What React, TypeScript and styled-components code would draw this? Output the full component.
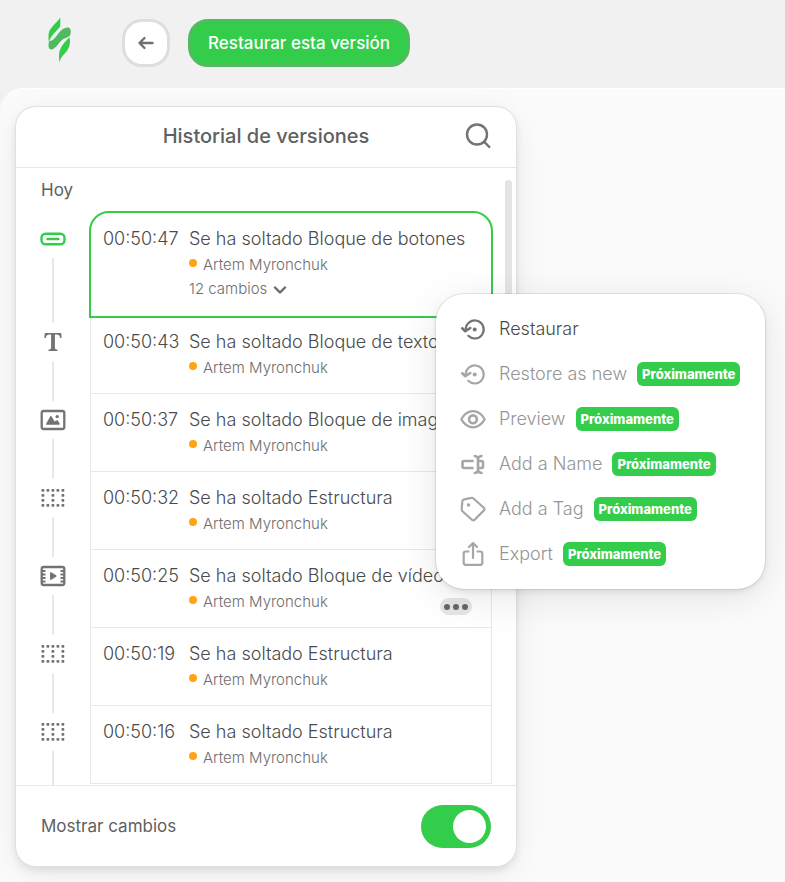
import React, { useState } from "react";
import styled, { createGlobalStyle, css } from "styled-components";

const GREEN = "#34cc4b";
const GREEN_DARK = "#53bb5f";
const TEXT = "#606060";
const TEXT_LIGHT = "#4a4a4a";
const MUTED = "#6e6e6e";
const ICON = "#737373";
const LINE = "#e8e8e8";

const GlobalStyle = createGlobalStyle`
  *, *::before, *::after { box-sizing: border-box; }
  body {
    margin: 0;
    background: #f1f1f1;
    color: ${TEXT};
    font-family: Inter, "Liberation Sans", sans-serif;
    font-size: 17px;
    line-height: 24px;
  }
  button { font: inherit; color: inherit; cursor: pointer; }
  h1, h2, p, ul, ol { margin: 0; padding: 0; list-style: none; font-weight: 400; }
  svg { display: block; flex: none; }
`;

const Page = styled.div`
  display: flex;
  flex-direction: column;
  height: 100vh;
  min-height: 600px;
  overflow: hidden;
`;

const TopBar = styled.header`
  display: flex;
  flex: none;
  align-items: center;
  height: 88px;
  padding: 0 48px 2px;
`;

const LogoLink = styled.a`
  margin-right: 50px;
  margin-bottom: 6px;
`;

const BackButton = styled.button`
  display: grid;
  place-items: center;
  width: 48px;
  height: 48px;
  margin-right: 18px;
  padding: 0;
  border: 3px solid #dedede;
  border-radius: 20px;
  background: #fff;
`;

const RestoreButton = styled.button`
  height: 48px;
  padding: 0 17px;
  border: 3px solid ${GREEN_DARK};
  border-radius: 20px;
  background: ${GREEN};
  color: #fff;
  font-size: 17px;
  font-weight: 500;
  white-space: nowrap;
`;

const Canvas = styled.main`
  display: flex;
  flex: 1;
  min-height: 0;
  padding: 18px 16px 16px;
  border-top: 1px solid #fff;
  border-top-left-radius: 24px;
  background: #fbfbfb;
`;

const Panel = styled.section`
  position: relative;
  display: flex;
  flex-direction: column;
  flex: 0 1 500px;
  min-width: 0;
  border-radius: 20px;
  background: #fff;
  box-shadow: 0 0 0 1px #e0e0e0, 0 4px 8px rgba(0, 0, 0, 0.1), 0 8px 36px rgba(0, 0, 0, 0.07);
`;

const PanelHeader = styled.div`
  display: grid;
  grid-template-columns: 48px 1fr 48px;
  align-items: center;
  flex: none;
  height: 61px;
  padding: 0 14px 2px;
  border-bottom: 1px solid ${LINE};
`;

const PanelTitle = styled.h1`
  grid-column: 2;
  font-size: 20px;
  font-weight: 500;
  text-align: center;
`;

const IconButton = styled.button`
  display: grid;
  place-items: center;
  width: 48px;
  height: 48px;
  padding: 0;
  border: 0;
  background: none;
`;

const ListArea = styled.div`
  position: relative;
  flex: 1;
  min-height: 0;
  padding: 10px 24px 0 0;
  overflow: hidden;
`;

const ScrollThumb = styled.div`
  position: absolute;
  top: 12px;
  right: 4px;
  width: 7px;
  height: 240px;
  border-radius: 4px;
  background: #e4e4e4;
`;

const DayHeading = styled.h2`
  padding-left: 25px;
  margin-bottom: 9px;
  font-size: 17px;
`;

const Entry = styled.li`
  display: grid;
  grid-template-columns: 73px minmax(0, 1fr);
  margin-right: -1px;
`;

const Rail = styled.div`
  display: flex;
  flex-direction: column;
  align-items: center;
`;

const RailIcon = styled.div<{ $active?: boolean }>`
  display: grid;
  place-items: center;
  flex: none;
  height: 38px;
  margin-top: ${(p) => (p.$active ? 9 : 7)}px;
  color: ${(p) => (p.$active ? GREEN : ICON)};
`;

const RailLine = styled.div`
  flex: 1;
  width: 2px;
  margin-bottom: -7px;
  background: ${LINE};
`;

const Card = styled.article<{ $active?: boolean }>`
  position: relative;
  display: grid;
  grid-template-columns: 86px minmax(0, 1fr);
  color: ${TEXT_LIGHT};
  ${(p) =>
    p.$active
      ? css`
          min-height: 107px;
          margin-bottom: -2px;
          padding: 14px 0 14px 12px;
          border: 2px solid ${GREEN};
          border-radius: 20px 20px 0 0;
          z-index: 1;
        `
      : css`
          min-height: 78px;
          margin: 0 1px;
          padding: 14px 0 12px 12px;
          border: 1px solid ${LINE};
          border-top: 0;
        `}
`;

const Time = styled.time`
  font-size: 18px;
  font-weight: 300;
`;

const Action = styled.p`
  font-size: 18px;
  font-weight: 300;
  white-space: nowrap;
`;

const Author = styled.p`
  display: flex;
  align-items: center;
  gap: 6px;
  padding-top: 2px;
  color: ${MUTED};
  font-size: 15px;
  font-weight: 300;

  &::before {
    content: "";
    width: 8px;
    height: 8px;
    margin-bottom: 4px;
    border-radius: 50%;
    background: #ffa412;
  }
`;

const ChangesButton = styled.button`
  display: flex;
  align-items: center;
  gap: 6px;
  padding: 0;
  border: 0;
  background: none;
  color: ${MUTED};
  font-size: 15px;
  font-weight: 300;
`;

const MoreButton = styled.button`
  position: absolute;
  right: 19px;
  bottom: 12px;
  display: flex;
  align-items: center;
  justify-content: center;
  gap: 3px;
  width: 32px;
  height: 17px;
  padding: 0;
  border: 0;
  border-radius: 9px;
  background: #e6e6e6;
`;

const MoreDot = styled.span`
  width: 6px;
  height: 6px;
  border-radius: 50%;
  background: #666;
`;

const Menu = styled.ul`
  position: absolute;
  top: 187px;
  left: 420px;
  z-index: 2;
  width: 329px;
  padding: 12px 24px 13px;
  border-radius: 28px;
  background: #fff;
  box-shadow: 0 0 0 1px rgba(0, 0, 0, 0.08), 0 3px 6px rgba(0, 0, 0, 0.08), 0 8px 40px rgba(0, 0, 0, 0.1);
`;

const MenuButton = styled.button`
  display: flex;
  align-items: center;
  width: 100%;
  height: 45px;
  padding: 0;
  border: 0;
  background: none;
  color: ${TEXT_LIGHT};
  font-size: 18px;
  font-weight: 300;
  white-space: nowrap;

  svg { margin-right: 13px; color: ${ICON}; }
  &:disabled { color: #959595; cursor: default; }
  &:disabled svg { color: #a6a6a6; }
`;

const SoonBadge = styled.span`
  margin-left: 10px;
  padding: 0 5px;
  border-radius: 6px;
  background: ${GREEN};
  color: #fff;
  font-size: 13px;
  font-weight: 800;
`;

const PanelFooter = styled.label`
  display: flex;
  align-items: center;
  justify-content: space-between;
  flex: none;
  height: 81px;
  padding: 0 25px;
  border-top: 1px solid ${LINE};
`;

const Toggle = styled.input`
  appearance: none;
  display: flex;
  align-items: center;
  width: 70px;
  height: 43px;
  margin: 0;
  padding: 5px;
  border-radius: 22px;
  background: #cfcfcf;
  cursor: pointer;

  &::before {
    content: "";
    width: 33px;
    height: 33px;
    border-radius: 50%;
    background: #fff;
  }
  &:checked { justify-content: flex-end; background: ${GREEN}; }
`;

const Logo = () => (
  <svg width="24" height="46" viewBox="0 0 24 46" aria-hidden="true">
    <path d="M12.300 .4V9.300C8.500 14.500 2.800 18.500 1 25C.3 22 .2 18 1 15C2.500 10 9 5.500 12.300 .4Z" fill={GREEN} />
    <path d="M1 24.300C5 24.300 7.800 19.800 10.800 16C13.800 12.300 18 9.500 21 10.800C23 11.800 23.200 15.500 22.200 18C21 20.800 17.300 20.400 14.300 22.800C10.500 25.800 8.500 31 4.500 32.200C1.500 33 .3 31 .5 28Z" fill="#4fb95e" />
    <path d="M21.300 20.300C22.800 24 22 29 19.500 33C17 37 12.500 39.500 11.700 45.500C10.800 40 10.500 35.500 12.800 31C14.800 27 18.500 23.500 21.300 20.300Z" fill={GREEN} />
  </svg>
);

const ArrowLeftIcon = () => (
  <svg width="18" height="16" viewBox="0 0 18 16" fill="none" stroke="#707070" strokeWidth="2.400" strokeLinecap="round" strokeLinejoin="round" aria-hidden="true">
    <path d="M15.500 8H3M7.500 3L2.500 8L7.500 13" />
  </svg>
);

const SearchIcon = () => (
  <svg width="28" height="28" viewBox="0 0 28 28" fill="none" stroke={ICON} strokeWidth="2.400" strokeLinecap="round" aria-hidden="true">
    <circle cx="13" cy="12.500" r="10" />
    <path d="M20.300 19.800L25.300 25" />
  </svg>
);

const ButtonIcon = () => (
  <svg width="26" height="14" viewBox="0 0 26 14" fill="none" stroke="currentColor" strokeWidth="2.400" strokeLinecap="round" aria-hidden="true">
    <rect x="1.500" y="1.700" width="23" height="10.600" rx="4" />
    <path d="M7.500 7H18.500" />
  </svg>
);

const TextIcon = () => (
  <svg width="18" height="18" viewBox="0 0 18 18" fill="currentColor" aria-hidden="true">
    <path d="M.8 0H17.200L17.600 5H16.300C15.700 2.700 14.800 1.600 12.500 1.600H10.900V14.500C10.900 16 11.500 16.500 13.500 16.600V18H4.500V16.600C6.500 16.500 7.100 16 7.100 14.500V1.600H5.500C3.200 1.600 2.300 2.700 1.700 5H.4Z" />
  </svg>
);

const ImageIcon = () => (
  <svg width="26" height="22" viewBox="0 0 26 22" aria-hidden="true">
    <rect x="1.700" y="2" width="22.600" height="18" rx="2" fill="none" stroke="currentColor" strokeWidth="2.300" />
    <path d="M6 15.700L6.500 14L10.200 7.500C10.600 6.900 11.200 6.900 11.600 7.500L14.600 12.500L16.500 11.500C17 11.200 17.500 11.400 17.900 11.800L19.700 14.500C20 15.200 19.700 15.700 19 15.700Z" fill="currentColor" />
    <circle cx="17.200" cy="7.600" r="1.700" fill="currentColor" />
  </svg>
);

const structureDots = [
  ...[0, 5, 10, 15, 20].flatMap((x) => [[x, 0], [x, 15]]),
  ...[0, 10, 20].flatMap((x) => [[x, 5], [x, 10]]),
];

const StructureIcon = () => (
  <svg width="24" height="18" viewBox="0 0 24 18" fill="currentColor" aria-hidden="true">
    {structureDots.map(([x, y]) => (
      <rect key={`${x}-${y}`} x={x + 0.5} y={y} width="2.800" height="2.800" rx=".7" />
    ))}
  </svg>
);

const VideoIcon = () => (
  <svg width="26" height="22" viewBox="0 0 26 22" fill="none" stroke="currentColor" aria-hidden="true">
    <rect x="1.700" y="2" width="22.600" height="18" rx="2" strokeWidth="2.300" />
    <path d="M2 6H5.500M2 9.500H5.500M2 13H5.500M2 16.500H5.500M20.500 6H24M20.500 9.500H24M20.500 13H24M20.500 16.500H24" strokeWidth="1.800" />
    <path d="M10.800 7.900L15.700 11L10.800 14.100Z" fill="currentColor" strokeWidth="1.500" strokeLinejoin="round" />
  </svg>
);

const ChevronIcon = () => (
  <svg width="14" height="10" viewBox="0 0 14 10" fill="none" stroke="#6a6a6a" strokeWidth="2.400" strokeLinecap="round" strokeLinejoin="round" aria-hidden="true">
    <path d="M2 3.500L7 8.500L12 3.500" />
  </svg>
);

const MenuSvg = ({ children }: { children: React.ReactNode }) => (
  <svg width="26" height="26" viewBox="0 0 26 26" fill="none" stroke="currentColor" strokeWidth="2.200" strokeLinecap="round" strokeLinejoin="round" aria-hidden="true">
    {children}
  </svg>
);

const RestoreIcon = () => (
  <MenuSvg>
    <path d="M5.700 13.500A9 9 0 1 1 8.300 19.800" />
    <path d="M2.200 12.300L5.300 15.200L10.300 12" strokeWidth="2.600" />
    <circle cx="14.700" cy="13.500" r="2" fill="currentColor" stroke="none" />
  </MenuSvg>
);

const EyeIcon = () => (
  <MenuSvg>
    <path d="M1.800 14.200C1.300 13.500 1.300 13 1.800 12.300C4.500 8 8.500 5.200 13 5.200S21.500 8 24.200 12.300C24.700 13 24.700 13.500 24.200 14.200C21.500 18.500 17.500 21.300 13 21.300S4.500 18.500 1.800 14.200Z" />
    <circle cx="13" cy="13.300" r="3.900" strokeWidth="2.600" />
  </MenuSvg>
);

const NameIcon = () => (
  <MenuSvg>
    <g strokeWidth="2.600">
      <path d="M12.500 10H4C3 10 2.500 10.500 2.500 11.500V15.500C2.500 16.500 3 17 4 17H12.500" />
      <path d="M18.500 10H21.500C22.500 10 23 10.500 23 11.500V15.500C23 16.500 22.500 17 21.500 17H18.500" />
      <path d="M14.800 5C16.800 5.300 18 6.300 18 8V19C18 20.700 16.800 21.700 14.800 22M21.500 5C19.500 5.300 18 6.300 18 8M21.500 22C19.500 21.700 18 20.700 18 19" />
    </g>
  </MenuSvg>
);

const TagIcon = () => (
  <MenuSvg>
    <path d="M4.200 3.300L11.300 1.900C12.200 1.700 12.900 1.900 13.500 2.500L23.800 11.800C24.700 12.700 24.700 13.500 23.900 14.400L14.600 23.700C13.700 24.600 12.800 24.600 11.900 23.800L2.500 15.200C1.900 14.600 1.600 13.900 1.700 13L2.400 5C2.500 4 3.200 3.500 4.200 3.300Z" />
    <circle cx="8.500" cy="9" r="1.800" fill="currentColor" stroke="none" />
  </MenuSvg>
);

const ExportIcon = () => (
  <MenuSvg>
    <path d="M8.500 10.500H5.800C4.300 10.500 3.700 11.200 3.700 12.500V21.800C3.700 23.100 4.300 23.800 5.800 23.800H20.200C21.700 23.800 22.300 23.100 22.300 21.800V12.500C22.300 11.200 21.700 10.500 20.200 10.500H17.500" />
    <path d="M13 17V2.500M9 6L13 2L17 6" />
  </MenuSvg>
);

const entries = [
  { time: "00:50:47", action: "Se ha soltado Bloque de botones", Icon: ButtonIcon, changes: "12 cambios" },
  { time: "00:50:43", action: "Se ha soltado Bloque de texto", Icon: TextIcon },
  { time: "00:50:37", action: "Se ha soltado Bloque de imagen", Icon: ImageIcon },
  { time: "00:50:32", action: "Se ha soltado Estructura", Icon: StructureIcon },
  { time: "00:50:25", action: "Se ha soltado Bloque de vídeo", Icon: VideoIcon, menu: true },
  { time: "00:50:19", action: "Se ha soltado Estructura", Icon: StructureIcon },
  { time: "00:50:16", action: "Se ha soltado Estructura", Icon: StructureIcon },
];

const menuItems = [
  { label: "Restaurar", Icon: RestoreIcon, soon: false },
  { label: "Restore as new", Icon: RestoreIcon, soon: true },
  { label: "Preview", Icon: EyeIcon, soon: true },
  { label: "Add a Name", Icon: NameIcon, soon: true },
  { label: "Add a Tag", Icon: TagIcon, soon: true },
  { label: "Export", Icon: ExportIcon, soon: true },
];

export default function App() {
  const [showChanges, setShowChanges] = useState(true);

  return (
    <Page>
      <GlobalStyle />
      <TopBar>
        <LogoLink href="#" aria-label="Inicio"><Logo /></LogoLink>
        <BackButton aria-label="Volver"><ArrowLeftIcon /></BackButton>
        <RestoreButton>Restaurar esta versión</RestoreButton>
      </TopBar>
      <Canvas>
        <Panel>
          <PanelHeader>
            <PanelTitle>Historial de versiones</PanelTitle>
            <IconButton aria-label="Buscar"><SearchIcon /></IconButton>
          </PanelHeader>
          <ListArea>
            <DayHeading>Hoy</DayHeading>
            <ol>
              {entries.map(({ time, action, Icon, changes, menu }) => (
                <Entry key={time}>
                  <Rail>
                    <RailIcon $active={!!changes}><Icon /></RailIcon>
                    <RailLine />
                  </Rail>
                  <Card $active={!!changes}>
                    <Time>{time}</Time>
                    <div>
                      <Action>{action}</Action>
                      <Author>Artem Myronchuk</Author>
                      {changes && <ChangesButton>{changes}<ChevronIcon /></ChangesButton>}
                    </div>
                    {menu && (
                      <MoreButton aria-label="Más opciones"><MoreDot /><MoreDot /><MoreDot /></MoreButton>
                    )}
                  </Card>
                </Entry>
              ))}
            </ol>
            <ScrollThumb />
          </ListArea>
          <PanelFooter>
            Mostrar cambios
            <Toggle type="checkbox" role="switch" checked={showChanges} onChange={(e) => setShowChanges(e.target.checked)} />
          </PanelFooter>
          <Menu>
            {menuItems.map(({ label, Icon, soon }) => (
              <li key={label}>
                <MenuButton disabled={soon}>
                  <Icon />
                  {label}
                  {soon && <SoonBadge>Próximamente</SoonBadge>}
                </MenuButton>
              </li>
            ))}
          </Menu>
        </Panel>
      </Canvas>
    </Page>
  );
}
